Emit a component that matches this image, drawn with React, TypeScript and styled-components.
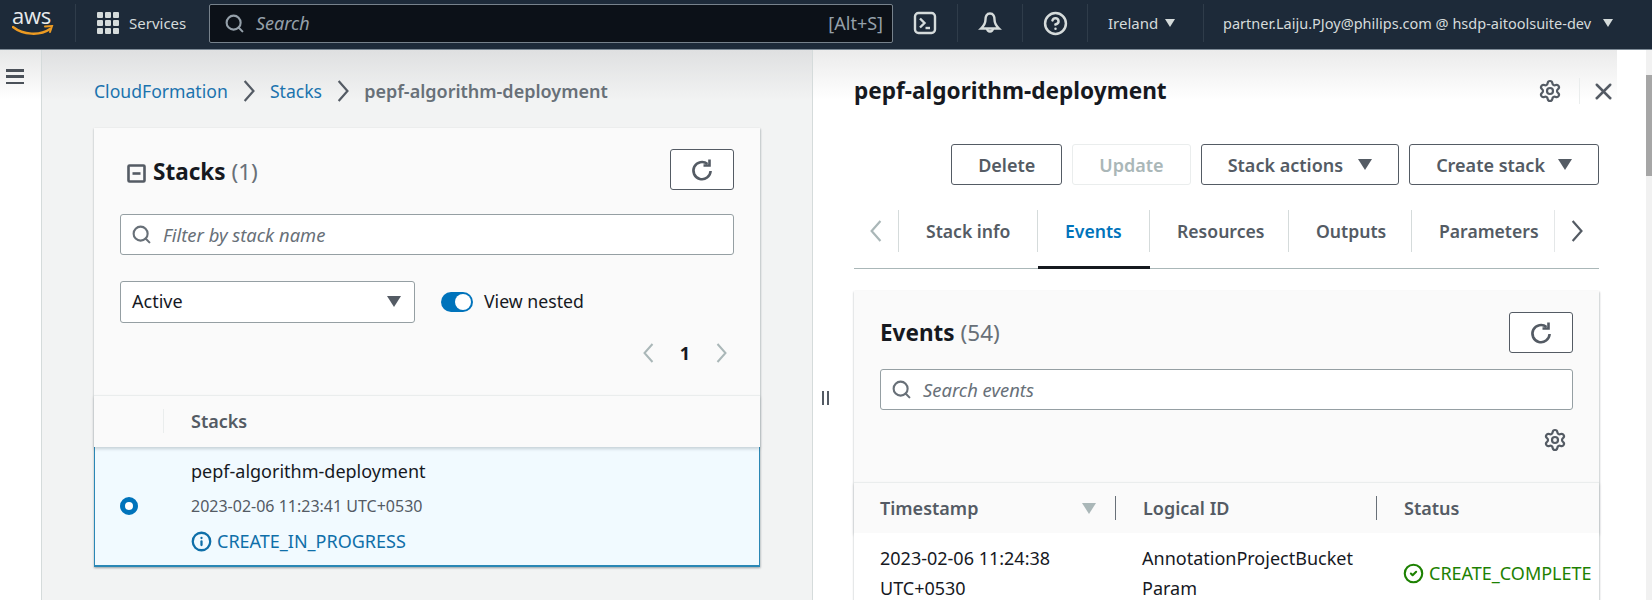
import React from 'react';
import styled, { createGlobalStyle } from 'styled-components';
import { CircleCheck, CircleHelp, Info, Search, Settings, X } from 'lucide-react';

const GlobalStyle = createGlobalStyle`
  html, body {
    margin: 0;
    overflow: hidden;
    background: #fff;
  }
  * {
    box-sizing: border-box;
  }
`;

const Page = styled.div`
  width: 1652px;
  height: 600px;
  display: flex;
  flex-direction: column;
  overflow: hidden;
  font-family: 'Noto Sans', sans-serif;
  font-size: 18px;
  line-height: 24px;
  color: #16191f;
`;

const TopBar = styled.header`
  height: 50px;
  flex: none;
  display: flex;
  align-items: center;
  padding-bottom: 3px;
  background: #1d2a39;
  border-bottom: 1px solid #7d8a96;
  color: #d5dbdb;
  font-size: 15px;
`;

const LogoBox = styled.div`
  width: 76px;
  flex: none;
  height: 38px;
  padding-left: 12px;
  border-right: 1px solid #2f3c4a;
  display: flex;
  flex-direction: column;
  align-items: flex-start;
  color: #e8eaec;
`;

const LogoWord = styled.span`
  font-family: 'Open Sans', sans-serif;
  font-size: 22px;
  line-height: 22px;
  letter-spacing: -0.3px;
`;

const ServicesButton = styled.div`
  width: 133px;
  flex: none;
  padding-left: 21px;
  display: flex;
  align-items: center;
  gap: 10px;
`;

const SearchBox = styled.div`
  width: 684px;
  height: 39px;
  flex: none;
  display: flex;
  align-items: center;
  padding: 0 9px 0 14px;
  background: #0c1118;
  border: 1px solid #77828c;
  border-radius: 2px;
  font-size: 18px;
  color: #95a0aa;
`;

const SearchHint = styled.span`
  flex: 1;
  margin-left: 11px;
  font-style: italic;
`;

const BarIcon = styled.div`
  height: 38px;
  width: ${(p: { $w: number }) => p.$w}px;
  flex: none;
  display: flex;
  align-items: center;
  justify-content: center;
  border-right: 1px solid #2f3c4a;
  color: #d5dbdb;
`;

const RegionMenu = styled.div`
  width: 116px;
  height: 38px;
  flex: none;
  display: flex;
  align-items: center;
  gap: 7px;
  padding-left: 20px;
  border-right: 1px solid #2f3c4a;
`;

const AccountMenu = styled.div`
  flex: none;
  display: flex;
  align-items: center;
  gap: 12px;
  padding-left: 19px;
  font-size: 14.5px;
  white-space: nowrap;
`;

const Caret = styled.span<{ $size?: number; $color?: string }>`
  width: 0;
  height: 0;
  flex: none;
  border-left: ${(p) => p.$size ?? 5}px solid transparent;
  border-right: ${(p) => p.$size ?? 5}px solid transparent;
  border-top: ${(p) => (p.$size ?? 5) * 1.6}px solid ${(p) => p.$color ?? 'currentColor'};
`;

const Body = styled.div`
  flex: 1;
  min-height: 0;
  display: flex;
`;

const NavRail = styled.nav`
  width: 42px;
  flex: none;
  padding: 19px 0 0 6px;
  background: linear-gradient(#e6e7e7, #fff 50px);
  border-right: 1px solid #d5dbdb;
  color: #545b64;
`;

const Hamburger = styled.div`
  width: 18px;
  height: 15px;
  display: flex;
  flex-direction: column;
  justify-content: space-between;
  span {
    height: 2.5px;
    background: #4b5159;
  }
`;

const Main = styled.main`
  width: 771px;
  flex: none;
  padding: 29px 52px 0;
  background: linear-gradient(#dfe0e1, #f2f3f3 50px);
  border-right: 1px solid #d5dbdb;
`;

const Breadcrumbs = styled.div`
  height: 24px;
  display: flex;
  align-items: center;
  color: #545b64;
  svg {
    margin: 0 15px;
  }
`;

const CrumbLink = styled.span`
  font-size: 17.6px;
  color: #1b73ae;
`;

const CrumbCurrent = styled.span`
  font-weight: 600;
  color: #687078;
`;

const Card = styled.section`
  background: #fafafa;
  box-shadow: 0 1px 2px rgba(0, 28, 36, 0.3), 1px 1px 2px rgba(0, 28, 36, 0.1);
`;

const StacksCard = styled(Card)`
  margin-top: 25px;
`;

const CardTop = styled.div`
  padding: 21px 26px 0;
`;

const HeadRow = styled.div`
  display: flex;
  align-items: center;
  justify-content: space-between;
`;

const CardTitle = styled.h2`
  margin: 0;
  display: flex;
  align-items: center;
  font-size: 22.5px;
  line-height: 28px;
  font-weight: 700;
  color: #16191f;
  svg {
    margin: 2px 7px 0 7px;
    color: #545b64;
  }
`;

const StacksTitle = styled(CardTitle)`
  margin-top: 5px;
`;

const CountText = styled.span`
  margin-left: 6px;
  font-weight: 400;
  color: #687078;
`;

const IconButton = styled.div`
  width: 64px;
  height: 41px;
  display: flex;
  align-items: center;
  justify-content: center;
  background: #fff;
  border: 1px solid #545b64;
  border-radius: 3px;
  color: #545b64;
`;

const FilterField = styled.div`
  height: 41px;
  margin-top: 24px;
  display: flex;
  align-items: center;
  gap: 11px;
  padding-left: 10px;
  background: #fff;
  border: 1px solid #959fa3;
  border-radius: 3px;
  font-size: 18.4px;
  color: #687078;
  font-style: italic;
`;

const ToolRow = styled.div`
  margin-top: 26px;
  height: 42px;
  display: flex;
  align-items: center;
`;

const SelectBox = styled.div`
  width: 295px;
  height: 42px;
  padding: 0 13px 2px 11px;
  display: flex;
  align-items: center;
  justify-content: space-between;
  background: #fff;
  border: 1px solid #959fa3;
  border-radius: 3px;
`;

const Toggle = styled.div`
  width: 32px;
  height: 20px;
  margin: 0 11px 0 26px;
  padding: 2px;
  display: flex;
  justify-content: flex-end;
  border-radius: 10px;
  background: #0073bb;
  span {
    width: 16px;
    height: 16px;
    border-radius: 50%;
    background: #fff;
  }
`;

const ToggleLabel = styled.span`
  font-size: 17.7px;
  padding-bottom: 2px;
`;

const Pager = styled.div`
  margin-top: 18px;
  height: 24px;
  display: flex;
  align-items: center;
  justify-content: flex-end;
  gap: 26px;
  padding-right: 7px;
  color: #aab7b8;
  b {
    color: #16191f;
    font-weight: 700;
  }
`;

const StacksHead = styled.div`
  margin-top: 30px;
  height: 52px;
  padding-bottom: 2px;
  display: flex;
  align-items: center;
  border-top: 1px solid #eaeded;
  font-weight: 600;
  color: #545b64;
  box-shadow: 0 2px 3px rgba(0, 28, 36, 0.18);
  position: relative;
`;

const HeadSpacer = styled.div`
  width: 70px;
  height: 24px;
  margin-right: 27px;
  border-right: 1px solid #eaeded;
`;

const SelectedRow = styled.div`
  height: 120px;
  display: flex;
  align-items: center;
  background: #f1faff;
  border: 1px solid #2a87b5;
  border-bottom-width: 2px;
  border-top: none;
`;

const Radio = styled.div`
  width: 18px;
  height: 18px;
  margin: 0 53px 0 25px;
  flex: none;
  border: 5px solid #0073bb;
  border-radius: 50%;
  background: #fff;
`;

const RowLines = styled.div`
  display: flex;
  flex-direction: column;
  gap: 11px;
`;

const RowDate = styled.div`
  color: #545b64;
  font-size: 16px;
`;

const StatusLine = styled.div`
  display: flex;
  align-items: center;
  gap: 5px;
  white-space: nowrap;
  color: ${(p: { $color: string }) => p.$color};
`;

const SplitColumn = styled.div`
  width: 41px;
  flex: none;
  padding: 341px 0 0 9px;
  background: linear-gradient(#ebebeb, #fff 50px);
  display: flex;
  gap: 3px;
  span {
    width: 2px;
    height: 14px;
    background: #545b64;
  }
`;

const Detail = styled.aside`
  width: 763px;
  flex: none;
  background: linear-gradient(#ebebeb, #fff 50px);
`;

const DetailHead = styled.div`
  height: 26px;
  margin-top: 28px;
  display: flex;
  align-items: center;
  color: #545b64;
`;

const DetailTitle = styled.h1`
  flex: 1;
  margin: 0;
  font-size: 22.6px;
  font-weight: 700;
  color: #16191f;
`;

const HeadDivider = styled.div`
  width: 1px;
  height: 26px;
  margin: 0 10px 0 17px;
  background: #eaeded;
`;

const ActionRow = styled.div`
  margin: 40px 18px 0 0;
  display: flex;
  justify-content: flex-end;
  gap: 10px;
`;

const ActionButton = styled.div<{ $off?: boolean; $gap?: number }>`
  height: 41px;
  padding: 0 26px;
  display: flex;
  align-items: center;
  gap: ${(p) => p.$gap ?? 13}px;
  background: #fff;
  border: 1px solid ${(p) => (p.$off ? '#eaeded' : '#545b64')};
  border-radius: 3px;
  font-weight: 600;
  white-space: nowrap;
  color: ${(p) => (p.$off ? '#aab7b8' : '#545b64')};
`;

const TabStrip = styled.div`
  margin: 25px 18px 0 0;
  height: 59px;
  padding-bottom: 16px;
  display: flex;
  align-items: center;
  border-bottom: 1px solid #aab7b8;
  position: relative;
`;

const TabArrow = styled.div<{ $w: number; $off?: boolean; $edge?: boolean }>`
  width: ${(p) => p.$w}px;
  height: 42px;
  flex: none;
  display: flex;
  align-items: center;
  justify-content: center;
  border-left: ${(p) => (p.$edge ? '1px solid #e4e7e8' : 'none')};
  color: ${(p) => (p.$off ? '#aab7b8' : '#545b64')};
`;

const Tab = styled.div<{ $active?: boolean; $w: number }>`
  width: ${(p) => p.$w}px;
  height: 42px;
  flex: none;
  display: flex;
  align-items: center;
  padding-left: 27px;
  border-left: 1px solid #d5dbdb;
  font-weight: 600;
  font-size: 17.6px;
  color: ${(p) => (p.$active ? '#0073bb' : '#545b64')};
  ${(p) =>
    p.$active &&
    `
    &::after {
      content: '';
      position: absolute;
      bottom: -1px;
      margin-left: -27px;
      height: 3px;
      width: ${p.$w}px;
      background: #16191f;
    }
  `}
`;

const EventsCard = styled(Card)`
  margin: 22px 18px 0 0;
  height: 320px;
`;

const TableTools = styled.div`
  height: 72px;
  padding: 18px 6px 0 0;
  display: flex;
  justify-content: flex-end;
  color: #545b64;
`;

const SearchField = styled(FilterField)`
  margin-top: 16px;
`;

const EventHead = styled.div`
  height: 51px;
  padding-left: 26px;
  display: grid;
  grid-template-columns: 235px 261px 1fr;
  align-items: center;
  border-top: 1px solid #eaeded;
  font-weight: 600;
  color: #545b64;
  box-shadow: 0 2px 3px rgba(0, 28, 36, 0.18);
`;

const EventHeadCell = styled.div<{ $sorted?: boolean; $divided?: boolean }>`
  height: 24px;
  display: flex;
  align-items: center;
  justify-content: ${(p) => (p.$sorted ? 'space-between' : 'flex-start')};
  padding-left: ${(p) => (p.$divided ? 27 : 0)}px;
  padding-right: ${(p) => (p.$sorted ? 19 : 0)}px;
  border-left: ${(p) => (p.$divided ? '1px solid #687078' : 'none')};
`;

const EventRow = styled.div`
  padding: 10px 0 0 26px;
  display: grid;
  grid-template-columns: 262px 261px 1fr;
  align-items: center;
  background: #fff;
  line-height: 30px;
`;

const Gutter = styled.div`
  flex: 1;
  display: flex;
  justify-content: flex-end;
`;

const ScrollTrack = styled.div`
  width: 6px;
  height: 100%;
  background: #f1f1f1;
  padding-top: 25px;
  span {
    display: block;
    height: 101px;
    background: #a6a6a6;
  }
`;

const GridGlyph = () => (
  <svg width="22" height="22" viewBox="0 0 22 22" fill="#d5dbdb">
    {[0, 8, 16].map((y) =>
      [0, 8, 16].map((x) => <rect key={`${x}-${y}`} x={x} y={y} width="6" height="6" rx="1" />),
    )}
  </svg>
);

const Swoosh = () => (
  <svg width="42" height="13" viewBox="0 0 42 13" fill="none" style={{ marginTop: -1 }}>
    <path d="M1 2c10 8 27 9 37 2" stroke="#ec9a22" strokeWidth="2.4" strokeLinecap="round" />
    <path d="M33 1.5l7-.5-2 6" stroke="#ec9a22" strokeWidth="2" fill="none" strokeLinecap="round" />
  </svg>
);

const RefreshGlyph = () => (
  <svg width="24" height="24" viewBox="0 0 24 24" fill="none" stroke="currentColor" strokeWidth="2.6">
    <path d="M17.5 6A8.6 8.6 0 1 0 20.6 13" />
    <path d="M19.5 1.5V7.5H13.5" />
  </svg>
);

const Chevron = ({ dir, tall }: { dir: 'left' | 'right'; tall: number }) => (
  <svg width={tall * 0.55} height={tall} viewBox="0 0 11 20" fill="none" stroke="currentColor" strokeWidth="2">
    <path d={dir === 'right' ? 'M1.5 1L9.5 10L1.5 19' : 'M9.5 1L1.5 10L9.5 19'} />
  </svg>
);

const CollapseGlyph = () => (
  <svg width="19" height="19" viewBox="0 0 19 19" fill="none" stroke="currentColor" strokeWidth="2.6">
    <rect x="1.5" y="1.5" width="16" height="16" rx="1" />
    <path d="M5.5 9.5H13.5" />
  </svg>
);

const ShellGlyph = () => (
  <svg width="24" height="24" viewBox="0 0 24 24" fill="none" stroke="currentColor" strokeWidth="2.4">
    <rect x="2" y="2" width="20" height="20" rx="3.5" />
    <path d="M7 7.5L11.5 12L7 16.5" />
    <path d="M12.5 17H17" />
  </svg>
);

const BellGlyph = () => (
  <svg width="24" height="24" viewBox="0 0 24 24" fill="none" stroke="currentColor" strokeWidth="2.4">
    <path d="M12 2.5C8.6 2.5 7.5 5.4 7.5 8.5C7.5 12.5 5.6 15 3 17.5H21C18.4 15 16.5 12.5 16.5 8.5C16.5 5.4 15.4 2.5 12 2.5Z" />
    <path d="M9 17.5A3 3 0 0 0 15 17.5" />
  </svg>
);

export default function App() {
  return (
    <Page>
      <GlobalStyle />
      <TopBar>
        <LogoBox>
          <LogoWord>aws</LogoWord>
          <Swoosh />
        </LogoBox>
        <ServicesButton>
          <GridGlyph />
          Services
        </ServicesButton>
        <SearchBox>
          <Search size={21} strokeWidth={2.4} />
          <SearchHint>Search</SearchHint>
          [Alt+S]
        </SearchBox>
        <BarIcon $w={65}>
          <ShellGlyph />
        </BarIcon>
        <BarIcon $w={65}>
          <BellGlyph />
        </BarIcon>
        <BarIcon $w={65}>
          <CircleHelp size={25} strokeWidth={2.4} />
        </BarIcon>
        <RegionMenu>
          Ireland
          <Caret />
        </RegionMenu>
        <AccountMenu>
          partner.Laiju.PJoy@philips.com @ hsdp-aitoolsuite-dev
          <Caret />
        </AccountMenu>
      </TopBar>
      <Body>
        <NavRail>
          <Hamburger>
            <span />
            <span />
            <span />
          </Hamburger>
        </NavRail>
        <Main>
          <Breadcrumbs>
            <CrumbLink>CloudFormation</CrumbLink>
            <Chevron dir="right" tall={22} />
            <CrumbLink>Stacks</CrumbLink>
            <Chevron dir="right" tall={22} />
            <CrumbCurrent>pepf-algorithm-deployment</CrumbCurrent>
          </Breadcrumbs>
          <StacksCard>
            <CardTop>
              <HeadRow>
                <StacksTitle>
                  <CollapseGlyph />
                  Stacks
                  <CountText>(1)</CountText>
                </StacksTitle>
                <IconButton>
                  <RefreshGlyph />
                </IconButton>
              </HeadRow>
              <FilterField>
                <Search size={21} strokeWidth={2.4} />
                Filter by stack name
              </FilterField>
              <ToolRow>
                <SelectBox>
                  Active
                  <Caret $size={7} $color="#545b64" />
                </SelectBox>
                <Toggle>
                  <span />
                </Toggle>
                <ToggleLabel>View nested</ToggleLabel>
              </ToolRow>
              <Pager>
                <Chevron dir="left" tall={20} />
                <b>1</b>
                <Chevron dir="right" tall={20} />
              </Pager>
            </CardTop>
            <StacksHead>
              <HeadSpacer />
              Stacks
            </StacksHead>
            <SelectedRow>
              <Radio />
              <RowLines>
                <div>pepf-algorithm-deployment</div>
                <RowDate>2023-02-06 11:23:41 UTC+0530</RowDate>
                <StatusLine $color="#0f6fa9">
                  <Info size={21} strokeWidth={2.6} />
                  CREATE_IN_PROGRESS
                </StatusLine>
              </RowLines>
            </SelectedRow>
          </StacksCard>
        </Main>
        <SplitColumn>
          <span />
          <span />
        </SplitColumn>
        <Detail>
          <DetailHead>
            <DetailTitle>pepf-algorithm-deployment</DetailTitle>
            <Settings size={24} strokeWidth={2.2} />
            <HeadDivider />
            <X size={27} strokeWidth={2.2} />
          </DetailHead>
          <ActionRow>
            <ActionButton>Delete</ActionButton>
            <ActionButton $off>Update</ActionButton>
            <ActionButton $gap={15}>
              Stack actions
              <Caret $size={7} />
            </ActionButton>
            <ActionButton>
              Create stack
              <Caret $size={7} />
            </ActionButton>
          </ActionRow>
          <TabStrip>
            <TabArrow $w={44} $off>
              <Chevron dir="left" tall={22} />
            </TabArrow>
            <Tab $w={139}>Stack info</Tab>
            <Tab $w={112} $active>
              Events
            </Tab>
            <Tab $w={139}>Resources</Tab>
            <Tab $w={123}>Outputs</Tab>
            <Tab $w={143}>Parameters</Tab>
            <TabArrow $w={45} $edge>
              <Chevron dir="right" tall={22} />
            </TabArrow>
          </TabStrip>
          <EventsCard>
            <CardTop>
              <HeadRow>
                <CardTitle>
                  Events
                  <CountText>(54)</CountText>
                </CardTitle>
                <IconButton>
                  <RefreshGlyph />
                </IconButton>
              </HeadRow>
              <SearchField>
                <Search size={21} strokeWidth={2.4} />
                Search events
              </SearchField>
              <TableTools>
                <Settings size={24} strokeWidth={2.2} />
              </TableTools>
            </CardTop>
            <EventHead>
              <EventHeadCell $sorted>
                Timestamp
                <Caret $size={7} $color="#aab7b8" />
              </EventHeadCell>
              <EventHeadCell $divided>Logical ID</EventHeadCell>
              <EventHeadCell $divided>Status</EventHeadCell>
            </EventHead>
            <EventRow>
              <div>
                2023-02-06 11:24:38
                <br />
                UTC+0530
              </div>
              <div>
                AnnotationProjectBucket
                <br />
                Param
              </div>
              <StatusLine $color="#1d8102">
                <CircleCheck size={21} strokeWidth={2.4} />
                CREATE_COMPLETE
              </StatusLine>
            </EventRow>
          </EventsCard>
        </Detail>
        <Gutter>
          <ScrollTrack>
            <span />
          </ScrollTrack>
        </Gutter>
      </Body>
    </Page>
  );
}
